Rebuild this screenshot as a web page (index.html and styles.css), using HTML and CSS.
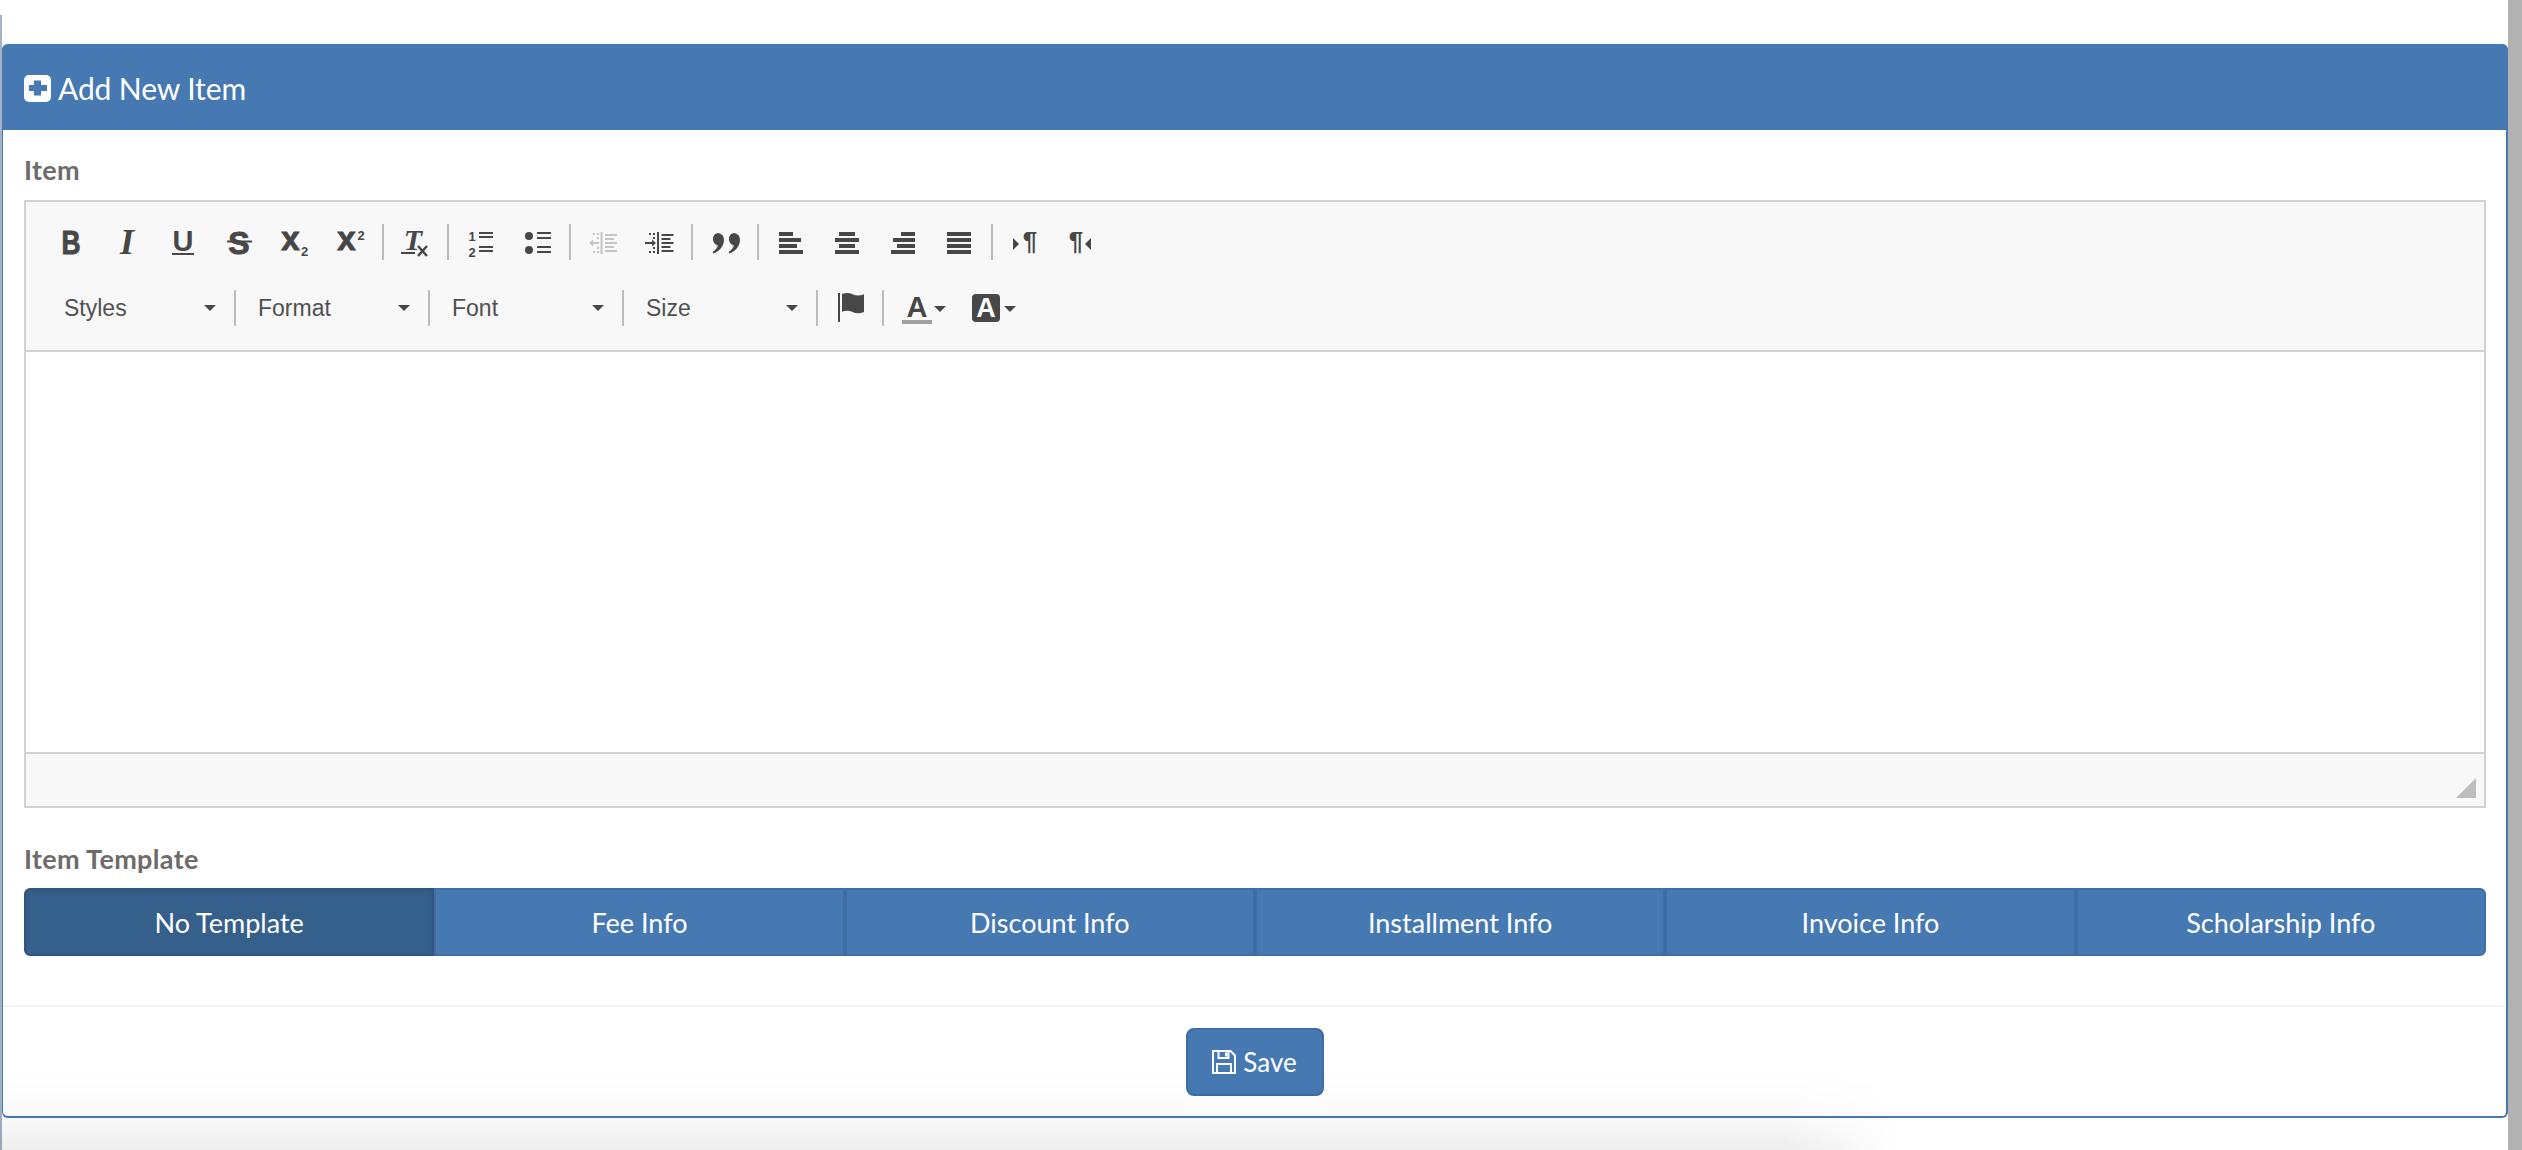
FILE: index.html
```html
<!DOCTYPE html>
<html lang="en">
<head>
<meta charset="utf-8">
<title>Add New Item</title>
<link rel="stylesheet" href="styles.css">
</head>
<body>
<div class="page">
  <div class="edge"></div>
  <main class="main">
    <section class="panel">
      <header class="panel-head">
        <svg class="plus-icon" viewBox="0 0 27 27"><rect width="27" height="27" rx="5" fill="#fff"/><path d="M10 6h7v4.500h6v6h-6V21h-7v-4.500H5v-6h5z" fill="#4679b2" transform="translate(0 -.5)"/></svg>
        <h1 class="panel-title">Add New Item</h1>
      </header>
      <div class="panel-body">
        <label class="field-label">Item</label>
        <div class="editor">
          <div class="toolbar">
            <div class="tool-row">
              <span class="tbtn"><svg class="ico" viewBox="0 0 56 36"><text class="g-bold g-heavy" transform="translate(28 30) scale(.8 1)" font-size="33" text-anchor="middle">B</text></svg></span>
              <span class="tbtn"><svg class="ico" viewBox="0 0 56 36"><text class="g-serif" x="28" y="30" font-size="36" text-anchor="middle">I</text></svg></span>
              <span class="tbtn"><svg class="ico" viewBox="0 0 56 36"><text class="g-bold" x="28" y="27" font-size="29" text-anchor="middle">U</text><rect x="17" y="29" width="22" height="2" class="f"/></svg></span>
              <span class="tbtn"><svg class="ico" viewBox="0 0 56 36"><text class="g-bold g-heavy" x="28" y="30" font-size="32" text-anchor="middle">S</text><rect x="16" y="16.500" width="25" height="2" class="f"/></svg></span>
              <span class="tbtn"><svg class="ico" viewBox="0 0 56 36"><text class="g-bold g-heavy" x="23.500" y="26" font-size="33" text-anchor="middle">x</text><text class="g-bold" x="37.500" y="31.500" font-size="13" text-anchor="middle">2</text></svg></span>
              <span class="tbtn"><svg class="ico" viewBox="0 0 56 36"><text class="g-bold g-heavy" x="23.500" y="26" font-size="33" text-anchor="middle">x</text><text class="g-bold" x="38" y="16" font-size="13" text-anchor="middle">2</text></svg></span>
              <span class="sep"></span>
              <span class="tbtn tbtn-tight"><svg class="ico" viewBox="0 0 55 36"><text class="g-serif" x="24" y="26" font-size="30" text-anchor="middle">T</text><rect x="12" y="28" width="14" height="2" class="f"/><path d="M29 22l9 10M38 22l-9 10" fill="none" stroke="#474747" stroke-width="2.500"/></svg></span>
              <span class="sep"></span>
              <span class="tbtn"><svg class="ico" viewBox="0 0 56 36"><text class="g-bold" x="18" y="17" font-size="13" text-anchor="middle">1</text><text class="g-bold" x="18" y="33" font-size="13" text-anchor="middle">2</text><path class="f" d="M25 8h14v2H25zM25 12h14v2H25zM25 22h14v2H25zM25 26h14v2H25z"/></svg></span>
              <span class="tbtn"><svg class="ico" viewBox="0 0 56 36"><circle class="f" cx="19" cy="12" r="4"/><circle class="f" cx="19" cy="26" r="4"/><path class="f" d="M27 8h14v2H27zM27 13h14v2H27zM27 22h14v2H27zM27 27h14v2H27z"/></svg></span>
              <span class="sep"></span>
              <span class="tbtn"><svg class="ico" viewBox="0 0 56 36"><path class="dis" d="M24.500 8h2v22h-2zM29 10h12v2H29zM29 14h9v2H29zM29 18h12v2H29zM29 22h9v2H29zM29 26h12v2H29zM13 19l4-3.500v2.500h6v2h-6v2.500zM17 9h2v2h-2zM21 9h2v2h-2zM17 27h2v2h-2zM21 27h2v2h-2zM21 13h2v2h-2zM21 23h2v2h-2z"/></svg></span>
              <span class="tbtn"><svg class="ico" viewBox="0 0 56 36"><path class="f" d="M25 8h2v22h-2zM29.500 10h12v2h-12zM29.500 14h9v2h-9zM29.500 18h12v2h-12zM29.500 22h9v2h-9zM29.500 26h12v2h-12zM24 19l-4-3.500v2.500h-7v2h7v2.500zM17 9h2v2h-2zM21 9h2v2h-2zM17 27h2v2h-2zM21 27h2v2h-2zM21 13h2v2h-2zM21 23h2v2h-2z"/></svg></span>
              <span class="sep"></span>
              <span class="tbtn"><svg class="ico" viewBox="0 0 56 36"><path class="f" d="M19.500 9a6.500 6.500 0 0 1 6.500 7c-.2 6-4 11-10.500 13.500l-1-1.500c3-2 5-4.500 5.300-6.500A6.500 6.500 0 0 1 19.500 9zM35.500 9a6.500 6.500 0 0 1 6.500 7c-.2 6-4 11-10.500 13.500l-1-1.500c3-2 5-4.500 5.300-6.500A6.500 6.500 0 0 1 35.500 9z"/></svg></span>
              <span class="sep"></span>
              <span class="tbtn"><svg class="ico" viewBox="0 0 56 36"><path class="f" d="M15 8h14v4H15zM15 14h22v4H15zM15 20h18v4H15zM15 26h24v4H15z"/></svg></span>
              <span class="tbtn"><svg class="ico" viewBox="0 0 56 36"><path class="f" d="M19 8h16v4H19zM15 14h24v4H15zM19 20h16v4H19zM15 26h24v4H15z"/></svg></span>
              <span class="tbtn"><svg class="ico" viewBox="0 0 56 36"><path class="f" d="M25 8h14v4H25zM17 14h22v4H17zM21 20h18v4H21zM15 26h24v4H15z"/></svg></span>
              <span class="tbtn"><svg class="ico" viewBox="0 0 56 36"><path class="f" d="M15 8h24v4H15zM15 14h24v4H15zM15 20h24v4H15zM15 26h24v4H15z"/></svg></span>
              <span class="sep"></span>
              <span class="tbtn"><svg class="ico" viewBox="0 0 56 36"><path class="f" d="M15 14l6 6-6 6z"/><text class="g-bold" x="32" y="26" font-size="26" text-anchor="middle">¶</text></svg></span>
              <span class="tbtn"><svg class="ico" viewBox="0 0 56 36"><text class="g-bold" x="22" y="26" font-size="26" text-anchor="middle">¶</text><path class="f" d="M37 14l-6 6 6 6z"/></svg></span>
            </div>
            <div class="tool-row tool-row-combos">
              <span class="combo"><span>Styles</span><i class="caret"></i></span>
              <span class="sep"></span>
              <span class="combo"><span>Format</span><i class="caret"></i></span>
              <span class="sep"></span>
              <span class="combo"><span>Font</span><i class="caret"></i></span>
              <span class="sep"></span>
              <span class="combo"><span>Size</span><i class="caret"></i></span>
              <span class="sep"></span>
              <span class="tbtn tbtn-flag"><svg class="ico" viewBox="0 0 60 36"><path class="f" d="M18 3h2v29h-2zM22 4c4-1.500 8-1 11 .5s7 1.500 11-.2V22c-4 1.700-8 1.700-11 .2s-7-2-11-.5z"/></svg></span>
              <span class="sep"></span>
              <span class="tbtn tbtn-color"><svg class="ico" viewBox="0 0 68 36"><text class="g-bold" x="31" y="27" font-size="29" text-anchor="middle">A</text><rect x="16" y="30" width="30" height="4" fill="#a0a0a0"/><path class="f" d="M48 16h12l-6 6z"/></svg></span>
              <span class="tbtn tbtn-color"><svg class="ico" viewBox="0 0 68 36"><rect class="f" x="18" y="4" width="28" height="28" rx="4"/><text class="g-bold g-white" x="32" y="27" font-size="27" text-anchor="middle">A</text><path class="f" d="M50 16h12l-6 6z"/></svg></span>
            </div>
          </div>
          <div class="editor-body"></div>
          <div class="editor-foot"><span class="resizer"></span></div>
        </div>
        <label class="field-label field-label-gap">Item Template</label>
        <div class="btn-group">
          <button class="seg seg-active">No Template</button>
          <button class="seg">Fee Info</button>
          <button class="seg">Discount Info</button>
          <button class="seg">Installment Info</button>
          <button class="seg">Invoice Info</button>
          <button class="seg">Scholarship Info</button>
        </div>
      </div>
      <footer class="panel-foot">
        <button class="save">
          <svg class="save-icon" viewBox="0 0 24 24"><path d="M1 1h17.500L23 5.500V23H1zM6.500 1.500v6.500h10V1.500M5 23V14h14v9" fill="none" stroke="#fff" stroke-width="2"/><rect x="13" y="2.500" width="2.500" height="4" fill="#fff"/></svg>
          <span>Save</span>
        </button>
      </footer>
    </section>
  </main>
  <div class="scrollbar"></div>
</div>
<div class="fade"></div>
</body>
</html>
```
FILE: styles.css
```css
* { box-sizing: border-box; }
html, body { margin: 0; padding: 0; height: 1150px; overflow: hidden; background: #fff; }
body { font-family: Lato, "Open Sans", sans-serif; position: relative; }

.page { display: flex; height: 1150px; }
.edge { width: 2px; margin-top: 15px; background: #a3b2c6; }
.main { flex: 1; min-width: 0; padding-top: 44px; }
.scrollbar { width: 14px; background: #b2b2b2; }

.panel {
  height: 1074px;
  display: flex;
  flex-direction: column;
  background: #fff;
  border: solid #4679b2;
  border-width: 0 2px 2px 1px;
  border-radius: 6px;
}
.panel-head {
  height: 86px;
  margin-left: -1px;
  margin-right: -2px;
  padding: 2px 0 0 22px;
  display: flex;
  align-items: center;
  gap: 7px;
  background: #4679b2;
  border-radius: 6px 6px 0 0;
}
.plus-icon { width: 27px; height: 27px; }
.panel-title { margin: 0; font-size: 30px; font-weight: 400; color: #fff; letter-spacing: -.1px; }

.panel-body { flex: 1; padding: 22px 20px 0 21px; }
.field-label {
  display: block;
  height: 36px;
  line-height: 36px;
  margin-bottom: 12px;
  font-size: 27px;
  font-weight: 700;
  letter-spacing: .35px;
  color: #6f6b6b;
}
.field-label-gap { margin-top: 33px; margin-bottom: 11px; }

.editor { border: 2px solid #d1d1d1; }
.toolbar {
  height: 150px;
  padding-top: 22px;
  background: #f8f8f8;
  border-bottom: 2px solid #d1d1d1;
  display: flex;
  flex-direction: column;
  gap: 30px;
}
.tool-row { display: flex; height: 36px; padding-left: 17px; }
.tool-row-combos { padding-left: 18px; }
.tbtn { width: 56px; height: 36px; flex: none; }
.tbtn-tight { width: 55px; }
.tbtn-flag { width: 60px; }
.tbtn-color { width: 68px; }
.ico { display: block; width: 100%; height: 36px; overflow: visible; }
.sep { width: 2px; height: 36px; flex: none; margin: 0 5px 0 3px; background: #bcbcbc; }
.tool-row-combos .sep { margin: 0 2px; }
.combo {
  width: 188px;
  height: 36px;
  flex: none;
  padding: 0 16px 0 20px;
  display: flex;
  align-items: center;
  justify-content: space-between;
  font-family: "Liberation Sans", Arial, sans-serif;
  font-size: 23px;
  color: #505050;
}
.caret { width: 0; height: 0; border: 6px solid transparent; border-top-color: #474747; border-bottom: 0; }

.f { fill: #474747; }
.dis { fill: #c4c4c4; }
.g-bold { font-family: "Liberation Sans", Arial, sans-serif; font-weight: 700; fill: #474747; }
.g-heavy { stroke: #474747; stroke-width: .9px; }
.g-serif { font-family: "Liberation Serif", "Times New Roman", serif; font-weight: 700; font-style: italic; fill: #474747; }
.g-white { fill: #fff; }

.editor-body { height: 400px; background: #fff; }
.editor-foot {
  height: 54px;
  padding: 0 8px 8px 0;
  display: flex;
  justify-content: flex-end;
  align-items: flex-end;
  background: #f8f8f8;
  border-top: 2px solid #d1d1d1;
}
.resizer { width: 20px; height: 20px; background: #bdbdbd; clip-path: polygon(100% 0, 100% 100%, 0 100%); }

.btn-group { display: flex; height: 68px; }
.seg {
  flex: 1;
  min-width: 0;
  margin: 0;
  padding: 0;
  font-family: inherit;
  font-size: 27px;
  color: #fff;
  background: #4679b2;
  border: 2px solid #3e6ea3;
}
.seg:first-child { border-radius: 6px 0 0 6px; }
.seg:last-child { border-radius: 0 6px 6px 0; }
.seg-active { background: #36608c; border-color: #2f5580; box-shadow: inset 0 3px 5px rgba(0, 0, 0, .08); }

.panel-foot {
  height: 111px;
  padding-top: 21px;
  display: flex;
  justify-content: center;
  align-items: flex-start;
  border-top: 2px solid #f3f3f3;
}
.save {
  width: 138px;
  height: 68px;
  display: flex;
  align-items: center;
  justify-content: center;
  gap: 7px;
  padding: 0;
  font-family: inherit;
  font-size: 26px;
  color: #fff;
  background: #4679b2;
  border: 2px solid #3e6ea3;
  border-radius: 8px;
}
.save-icon { width: 24px; height: 24px; }

.fade {
  position: absolute;
  left: 0;
  top: 1070px;
  width: 1900px;
  height: 80px;
  pointer-events: none;
  background: linear-gradient(to bottom, rgba(0,0,0,0), rgba(0,0,0,.02) 56%, rgba(0,0,0,.07));
  -webkit-mask-image: linear-gradient(to right, #000 94%, transparent);
  mask-image: linear-gradient(to right, #000 94%, transparent);
}
```
